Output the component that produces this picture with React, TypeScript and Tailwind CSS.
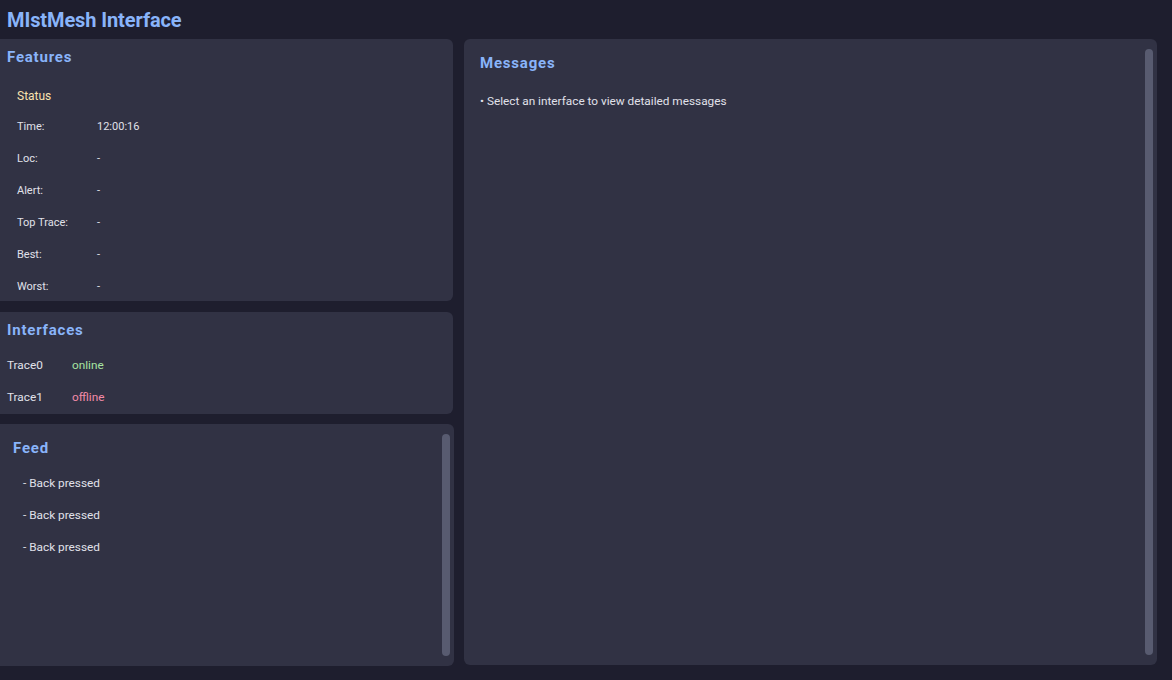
import React from "react";

const rows: [string, string][] = [
  ["Time:", "12:00:16"],
  ["Loc:", "-"],
  ["Alert:", "-"],
  ["Top Trace:", "-"],
  ["Best:", "-"],
  ["Worst:", "-"],
];

export default function App() {
  return (
    <div
      className="w-[1172px] h-[680px] bg-[#1e1e2e] text-[#e0e1ea] overflow-hidden flex flex-col"
      style={{ fontFamily: "Roboto, 'Noto Sans', sans-serif" }}
    >
      <div className="h-[39px] flex items-center pl-[7px]">
        <h1 className="text-[20px] leading-[24px] font-bold tracking-[-0.1px] text-[#89b4fa]">MIstMesh Interface</h1>
      </div>
      <div className="flex gap-[11px] pr-[15px]">
        <div className="w-[453px] flex flex-col">
          {/* Features */}
          <section className="h-[262px] bg-[#313244] rounded-r-[6px] overflow-hidden pt-[8px] pl-[7px]">
            <h2 className="text-[15px] leading-[20px] font-bold tracking-[0.8px] text-[#89b4fa]">Features</h2>
            <div className="mt-[13px] pl-[10px]">
              <div className="h-[31px] flex items-center text-[12px] text-[#f9e2af]">Status</div>
              {rows.map(([k, v]) => (
                <div key={k} className="h-[32px] flex items-center text-[11px]">
                  <span className="w-[80px]">{k}</span>
                  <span>{v}</span>
                </div>
              ))}
            </div>
          </section>
          {/* Interfaces */}
          <section className="mt-[11px] h-[102px] bg-[#313244] rounded-r-[6px] overflow-hidden pt-[8px] pl-[7px]">
            <h2 className="text-[15px] leading-[20px] font-bold tracking-[0.8px] text-[#89b4fa]">Interfaces</h2>
            <div className="mt-[10px]">
              <div className="h-[32px] flex items-center text-[11.8px]">
                <span className="w-[65px]">Trace0</span>
                <span className="text-[#a6e3a1]">online</span>
              </div>
              <div className="h-[32px] flex items-center text-[11.8px]">
                <span className="w-[65px]">Trace1</span>
                <span className="text-[#f38ba8]">offline</span>
              </div>
            </div>
          </section>
          {/* Feed */}
          <section className="mt-[10px] h-[242px] w-[454px] bg-[#313244] rounded-r-[6px] overflow-hidden flex py-[10px] pr-[4px]">
            <div className="flex-1 pt-[4px] pl-[13px]">
              <h2 className="text-[15px] leading-[20px] font-bold tracking-[0.8px] text-[#89b4fa]">Feed</h2>
              <div className="mt-[10px] pl-[10px]">
                {[0, 1, 2].map((i) => (
                  <div key={i} className="h-[32px] flex items-center text-[11.8px]">- Back pressed</div>
                ))}
              </div>
            </div>
            <div className="w-[8px] rounded-full bg-[#585b70]" />
          </section>
        </div>
        {/* Messages */}
        <section className="flex-1 h-[626px] bg-[#313244] rounded-[6px] flex py-[10px] pr-[4px]">
          <div className="flex-1 pt-[4px] pl-[16px]">
            <h2 className="text-[15px] leading-[20px] font-bold tracking-[0.8px] text-[#89b4fa]">Messages</h2>
            <div className="mt-[13px] h-[32px] flex items-center text-[11.8px]">• Select an interface to view detailed messages</div>
          </div>
          <div className="w-[8px] rounded-full bg-[#585b70]" />
        </section>
      </div>
    </div>
  );
}
